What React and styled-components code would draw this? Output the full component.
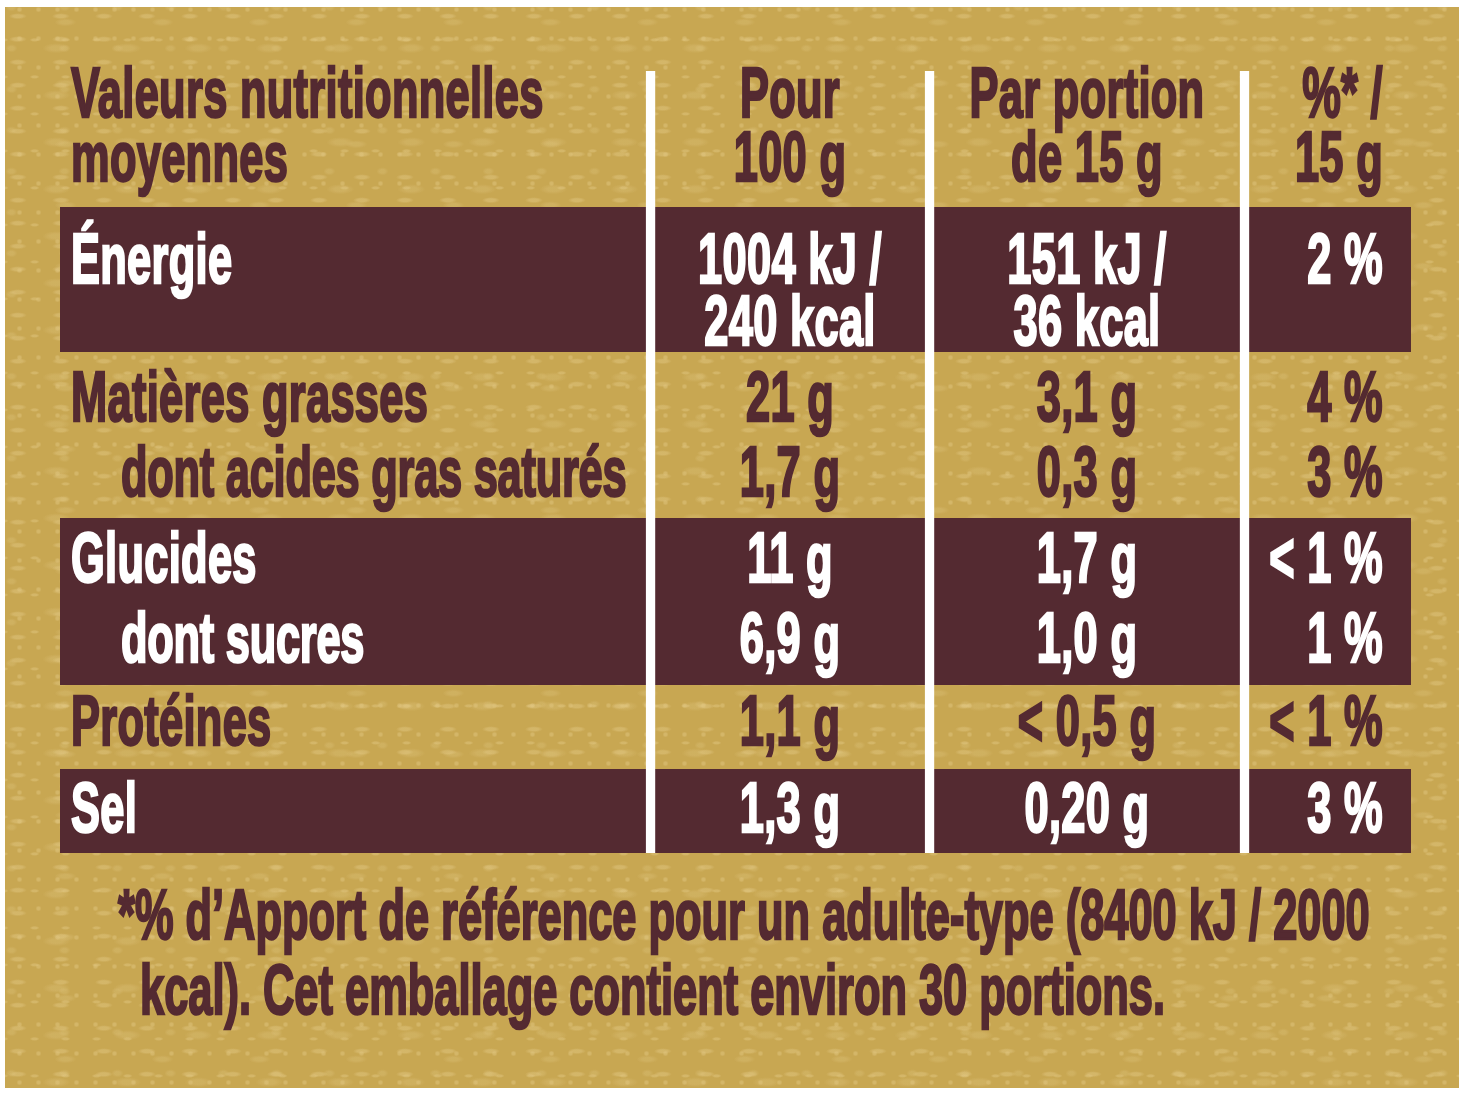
import React from "react";
import styled, { createGlobalStyle } from "styled-components";

// the label uses a condensed face; we squeeze Liberation Sans Bold instead
const K = 0.62;
const v = px => `${(px / K).toFixed(2)}px`;

const GOLD = "#c8a752";
const SPOT = "rgba(226, 200, 132, 0.45)";
const SPOT_SOFT = "rgba(226, 200, 132, 0.28)";
const MAROON = "#542a31";

const GlobalStyle = createGlobalStyle`
  html, body {
    margin: 0;
    background: #fff;
    overflow: hidden;
  }
`;

const Label = styled.div`
  box-sizing: border-box;
  margin: 7px 5px 0;
  height: 1081px;
  padding: 54px 0 0 55px;
  overflow: hidden;
  background-color: ${GOLD};
  background-image:
    radial-gradient(ellipse 9px 3px at 30% 40%, ${SPOT} 50%, transparent 100%),
    radial-gradient(ellipse 5px 2px at 60% 70%, ${SPOT} 50%, transparent 100%),
    radial-gradient(ellipse 14px 5px at 40% 60%, ${SPOT_SOFT} 45%, transparent 100%),
    radial-gradient(ellipse 3px 3px at 50% 50%, ${SPOT} 45%, transparent 100%),
    radial-gradient(ellipse 11px 4px at 20% 20%, ${SPOT_SOFT} 45%, transparent 100%),
    radial-gradient(ellipse 6px 4px at 80% 30%, ${SPOT_SOFT} 45%, transparent 100%);
  background-size: 43px 23px, 31px 37px, 71px 47px, 19px 29px, 97px 61px, 53px 41px;
  background-position: 0 0, 11px 7px, 23px 13px, 5px 17px, 41px 3px, 17px 29px;
  font-family: "Liberation Sans", Arial, sans-serif;
  font-weight: 700;
  font-size: 70px;
  color: ${MAROON};
`;

const Squeeze = styled.div`
  width: ${v(1351)};
  transform: scaleX(${K});
  transform-origin: left top;
  -webkit-text-stroke: 2.5px currentColor;
`;

const Band = styled.div`
  display: grid;
  grid-template-columns: ${v(586)} ${v(9)} ${v(270)} ${v(9)} ${v(306)} ${v(9)} ${v(162)};
  height: ${p => p.$h}px;
  background: ${p => (p.$dark ? MAROON : "transparent")};
  color: ${p => (p.$dark ? "#fff" : MAROON)};
`;

const Rule = styled.div`
  background: #fff;
  margin-top: ${p => p.$top || 0}px;
`;

const Cell = styled.div`
  padding-top: ${p => p.$pad}px;
  line-height: ${p => p.$lh}px;
  white-space: nowrap;
  text-align: ${p => p.$align};
  padding-left: ${p => (p.$align === "left" ? v(11) : 0)};
  padding-right: ${p => (p.$align === "right" ? v(28) : 0)};
`;

const Line = styled.div`
  padding-left: ${p => (p.$indent ? v(50) : 0)};
  letter-spacing: ${p => (p.$indent ? "-0.4px" : "0.5px")};
`;

const Footnote = styled.p`
  margin: 25px 0 0;
  padding-left: ${v(80)};
  text-indent: -${v(22)};
  line-height: 75px;
  white-space: nowrap;
`;

const ALIGN = ["left", "center", "center", "right"];

const bands = [
  {
    h: 146, pad: 0, lh: 64, header: true,
    cells: [
      ["Valeurs nutritionnelles", "moyennes"],
      ["Pour", "100 g"],
      ["Par portion", "de 15 g"],
      ["%* /", "15 g"]
    ]
  },
  {
    h: 145, pad: 21, lh: 62, dark: true,
    cells: [["Énergie"], ["1004 kJ /", "240 kcal"], ["151 kJ /", "36 kcal"], ["2 %"]]
  },
  {
    h: 166, pad: 8, lh: 75,
    cells: [
      ["Matières grasses", ">dont acides gras saturés"],
      ["21 g", "1,7 g"],
      ["3,1 g", "0,3 g"],
      ["4 %", "3 %"]
    ]
  },
  {
    h: 167, pad: 0, lh: 80, dark: true,
    cells: [["Glucides", ">dont sucres"], ["11 g", "6,9 g"], ["1,7 g", "1,0 g"], ["< 1 %", "1 %"]]
  },
  {
    h: 84, pad: 1, lh: 70,
    cells: [["Protéines"], ["1,1 g"], ["< 0,5 g"], ["< 1 %"]]
  },
  {
    h: 84, pad: 4, lh: 70, dark: true,
    cells: [["Sel"], ["1,3 g"], ["0,20 g"], ["3 %"]]
  }
];

const NutritionBand = ({ band }) => (
  <Band $h={band.h} $dark={band.dark}>
    {band.cells.map((lines, i) => (
      <React.Fragment key={i}>
        {i > 0 && <Rule $top={band.header ? 10 : 0} />}
        <Cell $pad={band.pad} $lh={band.lh} $align={ALIGN[i]}>
          {lines.map(text =>
            text.startsWith(">") ? (
              <Line key={text} $indent>{text.slice(1)}</Line>
            ) : (
              <Line key={text}>{text}</Line>
            )
          )}
        </Cell>
      </React.Fragment>
    ))}
  </Band>
);

export default function App() {
  return (
    <>
      <GlobalStyle />
      <Label>
        <Squeeze>
          {bands.map((band, i) => (
            <NutritionBand key={i} band={band} />
          ))}
          <Footnote>
            *% d’Apport de référence pour un adulte-type (8400 kJ / 2000
            <br />
            kcal). Cet emballage contient environ 30 portions.
          </Footnote>
        </Squeeze>
      </Label>
    </>
  );
}
